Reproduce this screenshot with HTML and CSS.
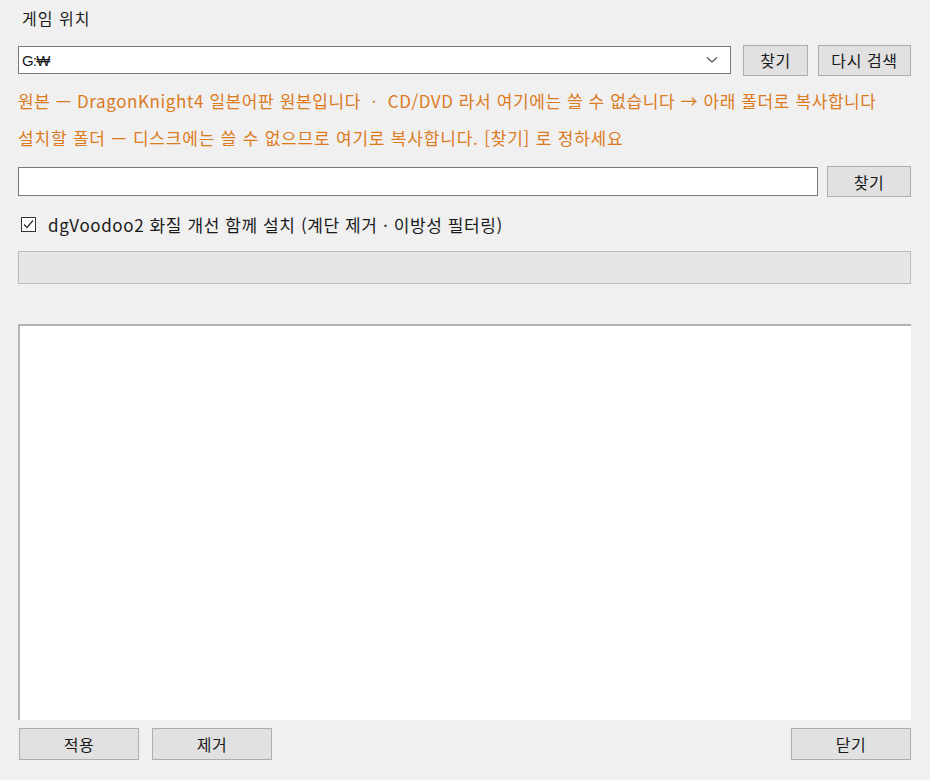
FILE: index.html
```html
<!DOCTYPE html>
<html lang="ko">
<head>
<meta charset="utf-8">
<link rel="stylesheet" href="styles.css">
</head>
<body>
<div class="win">
  <div class="label">게임 위치</div>
  <div class="row combo-row">
    <div class="combo">
      <span class="combo-text">G:₩</span>
      <svg class="chev" width="12" height="8" viewBox="0 0 12 8"><path d="M1 1.5 L6 6 L11 1.5" fill="none" stroke="#555" stroke-width="1.3"/></svg>
    </div>
    <button class="btn btn-find1">찾기</button>
    <button class="btn btn-rescan">다시 검색</button>
  </div>
  <div class="note note1">원본 — DragonKnight4 일본어판 원본입니다 &nbsp;·&nbsp; CD/DVD 라서 여기에는 쓸 수 없습니다 → 아래 폴더로 복사합니다</div>
  <div class="note note2">설치할 폴더 — 디스크에는 쓸 수 없으므로 여기로 복사합니다. [찾기] 로 정하세요</div>
  <div class="row input-row">
    <div class="textbox"></div>
    <button class="btn btn-find2">찾기</button>
  </div>
  <label class="check-row">
    <span class="checkbox">
      <svg width="13" height="13" viewBox="0 0 13 13"><path d="M2 6.5 L5 9.5 L11 2.5" fill="none" stroke="#333" stroke-width="1.3"/></svg>
    </span>
    <span class="check-label">dgVoodoo2 화질 개선 함께 설치 (계단 제거 · 이방성 필터링)</span>
  </label>
  <div class="progress"></div>
  <div class="log"></div>
  <div class="row bottom-row">
    <button class="btn btn-bottom">적용</button>
    <button class="btn btn-bottom btn-remove">제거</button>
    <span class="spacer"></span>
    <button class="btn btn-bottom btn-close">닫기</button>
  </div>
</div>
</body>
</html>
```
FILE: styles.css
```css
html, body {
  margin: 0;
  padding: 0;
  background: #f0f0f0;
}
body {
  font-family: "Noto Sans CJK KR", "Noto Sans", sans-serif;
  font-size: 17px;
  letter-spacing: 0.6px;
  color: #1a1a1a;
}
.win {
  width: 930px;
  height: 780px;
  box-sizing: border-box;
  padding: 0 19px 0 18px;
  display: flex;
  flex-direction: column;
}
.label {
  margin-top: 6px;
  padding-left: 4px;
  height: 24px;
  line-height: 24px;
  font-size: 16px;
  letter-spacing: 1px;
}
.row {
  display: flex;
  align-items: center;
}
.combo-row {
  margin-top: 15px;
  height: 30px;
}
.combo {
  width: 713px;
  height: 28px;
  box-sizing: border-box;
  border: 1px solid #7a7a7a;
  background: #fff;
  display: flex;
  align-items: center;
  padding: 0 12px 0 3px;
}
.combo-text {
  flex: 1;
  font-family: "Liberation Sans", "Noto Sans CJK KR", sans-serif;
  font-size: 15px;
  letter-spacing: -0.8px;
}
.btn {
  font-family: "Noto Sans CJK KR", "Noto Sans", sans-serif;
  font-size: 16px;
  letter-spacing: 0.6px;
  color: #1a1a1a;
  background: #e1e1e1;
  border: 1px solid #adadad;
  height: 31px;
  box-sizing: border-box;
  padding: 0;
  line-height: 1;
}
.btn-find1 {
  margin-left: 12px;
  width: 65px;
}
.btn-rescan {
  margin-left: 10px;
  width: 93px;
}
.note {
  color: #dc7a1e;
  font-size: 17px;
  height: 24px;
  line-height: 24px;
}
.note1 {
  margin-top: 14px;
}
.note2 {
  margin-top: 13px;
  letter-spacing: 0.8px;
}
.input-row {
  margin-top: 16px;
  height: 31px;
}
.textbox {
  width: 800px;
  height: 29px;
  box-sizing: border-box;
  border: 1px solid #7a7a7a;
  background: #fff;
}
.btn-find2 {
  margin-left: 9px;
  width: 84px;
}
.check-row {
  display: flex;
  align-items: center;
  margin-top: 15px;
  height: 24px;
}
.checkbox {
  width: 15px;
  height: 15px;
  box-sizing: border-box;
  border: 1px solid #333;
  background: #fff;
  margin-left: 3px;
  display: flex;
  align-items: center;
  justify-content: center;
}
.check-label {
  margin-left: 12px;
}
.progress {
  margin-top: 15px;
  height: 33px;
  box-sizing: border-box;
  border: 1px solid #bcbcbc;
  background: #e6e6e6;
}
.log {
  margin-top: 40px;
  height: 396px;
  box-sizing: border-box;
  background: #fff;
  border-top: 2px solid #b4b4b4;
  border-left: 2px solid #b4b4b4;
}
.bottom-row {
  margin-top: 8px;
  height: 32px;
}
.btn-bottom {
  width: 120px;
  height: 32px;
  margin-left: 1px;
}
.btn-remove {
  margin-left: 13px;
}
.spacer {
  flex: 1;
}
.btn-close {
  margin-left: 0;
}
```
